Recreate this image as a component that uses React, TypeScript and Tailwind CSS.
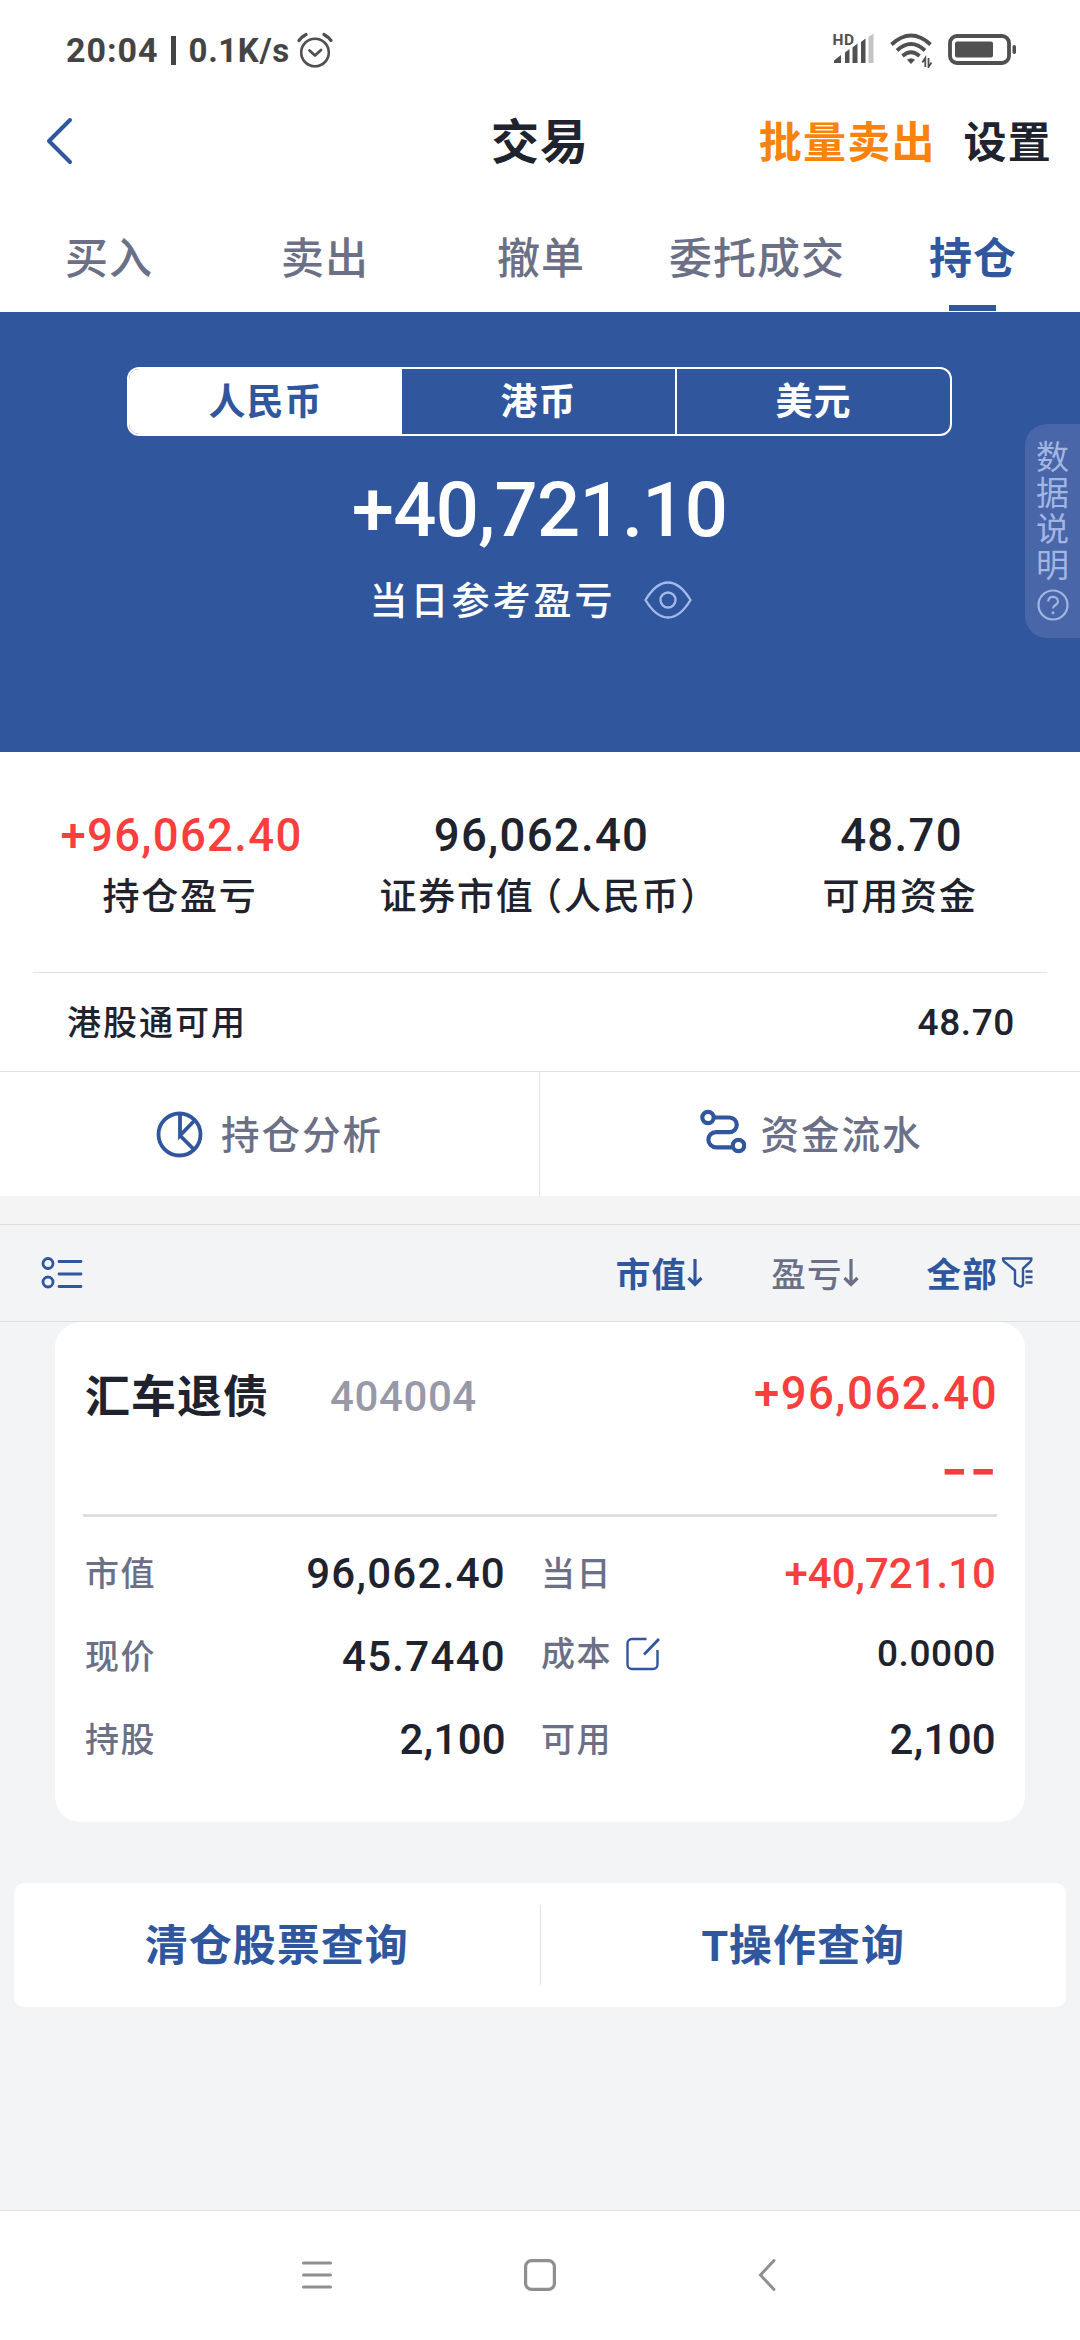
import { useState, type ReactNode } from "react";

const TABS = ["买入", "卖出", "撤单", "委托成交", "持仓"];
const CURRENCIES = ["人民币", "港币", "美元"];

function StatusBar() {
    return (
        <div className="h-[100px] pl-[66px] pr-[62px] flex items-center justify-between text-[#444]">
            <div className="flex items-center">
                <span className="text-[34px] leading-none font-bold tracking-[1px]">20:04</span>
                <span className="ml-[12px] w-[5px] h-[29px] bg-[#444]" />
                <span className="ml-[13px] text-[33px] leading-none font-bold tracking-[0.600px]">0.1K/s</span>
                <svg className="ml-[7px]" width="36" height="36" viewBox="0 0 36 36" fill="none" stroke="#505050" strokeLinecap="round">
                    <circle cx="18" cy="20.500" r="13.800" strokeWidth="2.600" />
                    <path d="M12.500 18.500l5.500 5 6-5.500" strokeWidth="2.800" strokeLinejoin="round" />
                    <path d="M2 8.500Q4.500 5 9 2.500M34 8.500Q31.500 5 27 2.500" strokeWidth="3.200" />
                </svg>
            </div>
            <div className="flex items-center">
                <svg width="44" height="36" viewBox="0 0 44 36" fill="#505050">
                    <text x="0.500" y="12.500" fontSize="15.500" fontWeight="700" letterSpacing="0.500">HD</text>
                    <path d="M2 31v-2.500l7-5.500v8zM13 31V20.500l4.500-3.500v14zM20.500 31V15.500l5-4v19.500zM29 31V10l4.500-3.500v24.500z" />
                    <path d="M36.500 31V5l5-3.500v29.500z" fill="#c4c4c4" />
                </svg>
                <svg className="ml-[14px]" width="44" height="36" viewBox="0 0 44 36" fill="none" stroke="#505050" strokeWidth="3.800">
                    <path d="M1.500 12.500Q21 -5.500 40.500 12.500" />
                    <path d="M7 18.500Q21 5.500 35 18.500" />
                    <path d="M12.500 24Q21 16.500 29.500 24" />
                    <path d="M21 32l-4-4.200q4-3.200 8 0z" fill="#505050" stroke="none" />
                    <path d="M35.300 35v-9l-3 4.500M38.500 26v9l3-4.500" strokeWidth="1.800" />
                </svg>
                <svg className="ml-[14px]" width="70" height="32" viewBox="0 0 70 32" fill="none">
                    <rect x="2" y="2" width="59" height="27" rx="7" stroke="#505050" strokeWidth="3.800" />
                    <rect x="7" y="7.500" width="38" height="16" rx="2" fill="#505050" />
                    <rect x="64.500" y="11" width="3.500" height="9" rx="1.700" fill="#505050" />
                </svg>
            </div>
        </div>
    );
}

function Header() {
    return (
        <div className="h-[82px] px-[28px] grid grid-cols-[1fr_auto_1fr] items-center text-[#20222e]">
            <div className="pl-[17px]">
                <svg width="30" height="48" viewBox="0 0 30 48" fill="none" stroke="#30569e" strokeWidth="4" strokeLinecap="round" strokeLinejoin="round">
                    <path d="M25 3L4 24l21 21" />
                </svg>
            </div>
            <h1 className="pt-[3px] text-[48px] leading-[60px] font-bold tracking-[1px]">交易</h1>
            <div className="pt-[3px] flex justify-end text-[43px] leading-[60px] tracking-[1.200px] font-bold">
                <span className="text-[#fb830b]">批量卖出</span>
                <span className="ml-[28px]">设置</span>
            </div>
        </div>
    );
}

function TabBar({ active, onChange }: { active: string; onChange: (tab: string) => void }) {
    return (
        <div className="h-[130px] grid grid-cols-5">
            {TABS.map((tab) => (
                <button
                    key={tab}
                    onClick={() => onChange(tab)}
                    className={`flex flex-col items-center justify-end text-[43px] tracking-[1px] whitespace-nowrap ${
                        tab === active ? "text-[#30569e] font-bold" : "text-[#6b7086] font-medium"
                    }`}
                >
                    <span className="h-[76px] pl-[2px] leading-[60px]">{tab}</span>
                    <span className={`w-[47px] h-[6px] mb-px ${tab === active ? "bg-[#30569e]" : ""}`} />
                </button>
            ))}
        </div>
    );
}

function ProfitPanel() {
    const [currency, setCurrency] = useState("人民币");

    return (
        <div className="relative h-[440px] bg-[#30569e] text-white pt-[55px] pr-px flex flex-col items-center">
            <div className="w-[825px] h-[69px] border-2 border-white rounded-[12px] overflow-hidden grid grid-cols-[273px_273px_1fr]">
                {CURRENCIES.map((name, i) => (
                    <button
                        key={name}
                        onClick={() => setCurrency(name)}
                        className={`pt-[3px] text-[37px] tracking-[1px] leading-[62px] font-bold ${
                            name === currency ? "bg-white text-[#30569e]" : ""
                        } ${i === 2 ? "border-l-2 border-white" : ""}`}
                    >
                        {name}
                    </button>
                ))}
            </div>
            <div className="mt-[34px] h-[80px] leading-[80px] text-[76px] font-medium tracking-[-0.700px]">+40,721.10</div>
            <div className="mt-[22px] flex items-center gap-[28px] mr-[18px]">
                <span className="pt-[2px] text-[38px] leading-[54px] tracking-[3px] font-medium">当日参考盈亏</span>
                <svg width="48" height="38" viewBox="0 0 48 38" fill="none" stroke="#a3b9ec" strokeWidth="2.400">
                    <path d="M1.500 19Q12 1.500 24 1.500T46.500 19Q36 36.500 24 36.500T1.500 19z" strokeLinejoin="round" />
                    <circle cx="24" cy="19" r="7.500" />
                </svg>
            </div>

            {/* floating help tab */}
            <div className="absolute right-0 top-[112px] w-[55px] h-[214px] bg-[#4866a8] rounded-l-[22px] pl-[11px] pt-[16px] text-[#a3b5e2]">
                <div className="w-[34px] text-[33px] leading-[36px] break-all">数据说明</div>
                <svg className="mt-[4px]" width="34" height="34" viewBox="0 0 34 34" fill="none" stroke="#a3b5e2" strokeWidth="2.200">
                    <circle cx="17" cy="17" r="14.500" />
                    <path d="M12.200 13.500c0-6.500 9.800-6 9.800 0 0 3.500-5 3.500-5 7" />
                    <circle cx="17" cy="24.800" r="1.500" fill="#a3b5e2" stroke="none" />
                </svg>
            </div>
        </div>
    );
}

function Stat({ value, red, children }: { value: string; red?: boolean; children: ReactNode }) {
    return (
        <div className="flex flex-col items-center">
            <span className={`pl-[3px] text-[45.500px] leading-[60px] font-medium tracking-[1.300px] ${red ? "text-[#f93e3e]" : ""}`}>{value}</span>
            <span className="mt-[2px] text-[37px] leading-[60px] font-medium tracking-[1.800px] whitespace-nowrap">{children}</span>
        </div>
    );
}

function Summary() {
    return (
        <div className="text-[#20222e]">
            <div className="h-[220px] pt-[54px] grid grid-cols-3">
                <Stat value="+96,062.40" red>持仓盈亏</Stat>
                <Stat value="96,062.40">
                    证券市值<span className="ml-[9px] [font-feature-settings:'halt']">（</span>人民币
                    <span className="[font-feature-settings:'halt']">）</span>
                </Stat>
                <Stat value="48.70">可用资金</Stat>
            </div>
            <div className="h-px mx-[33px] bg-[#dfe1e3]" />
            <div className="h-[98px] pt-[2px] pl-[67px] pr-[65px] flex items-center justify-between font-medium">
                <span className="text-[34px] tracking-[2px]">港股通可用</span>
                <span className="text-[37px] tracking-[0.600px]">48.70</span>
            </div>
            <div className="h-[125px] border-t border-[#dfe1e3] grid grid-cols-2 text-[38.500px] tracking-[2px] text-[#6b7086] font-medium">
                <div className="flex items-center justify-center gap-[18px] border-r border-[#e3e5e7]">
                    <svg width="47" height="47" viewBox="0 0 47 47" fill="none" stroke="#30569e" strokeWidth="3.800">
                        <circle cx="23.500" cy="23.500" r="21" />
                        <path d="M24 2.500V24.500L39 9M24 24.500L38.500 39" />
                    </svg>
                    <span className="pt-[4px]">持仓分析</span>
                </div>
                <div className="flex items-center justify-center gap-[14px] pl-[3px]">
                    <svg className="mb-[4px]" width="46" height="46" viewBox="0 0 46 46" fill="none" stroke="#30569e" strokeWidth="4.200">
                        <circle cx="8" cy="8.500" r="5.700" />
                        <circle cx="38.500" cy="36.500" r="5.700" />
                        <path d="M14 8.500h15.500a7.300 7.300 0 0 1 0 14.600H16a7.600 7.600 0 0 0 0 15.200h17" />
                    </svg>
                    <span className="pt-[4px]">资金流水</span>
                </div>
            </div>
        </div>
    );
}

function SortArrow() {
    return (
        <svg width="16" height="32" viewBox="0 0 16 32" fill="none" stroke="currentColor" strokeWidth="3.200">
            <path d="M8 2v26M1.500 21L8 27.500 14.500 21" />
        </svg>
    );
}

function Toolbar() {
    return (
        <div className="h-[98px] pl-[41px] pr-[46px] border-y border-[#dcdee0] bg-[#f2f4f6] flex items-center text-[34.500px] tracking-[1.200px] leading-[60px] text-[#30569e] font-medium">
            <svg width="42" height="34" viewBox="0 0 42 34" fill="none" stroke="#30569e" strokeWidth="2.800" strokeLinecap="round">
                <circle cx="7" cy="7.500" r="5" />
                <circle cx="7" cy="26" r="5" />
                <path d="M18 5.500h22M18 18h22M18 30.500h22" />
            </svg>
            <span className="ml-auto pt-[3px] font-bold">市值</span>
            <SortArrow />
            <div className="ml-[68px] flex items-center text-[#6b7086]">
                <span className="pt-[3px]">盈亏</span>
                <SortArrow />
            </div>
            <span className="ml-[68px] pt-[3px] font-bold">全部</span>
            <svg className="ml-[3px]" width="33" height="34" viewBox="0 0 33 34" fill="none" stroke="#30569e" strokeWidth="2.400" strokeLinejoin="round">
                <path d="M2 2.500h28.500q0 2-1.500 3.500L22 12.500v16q-1 3-4 1.500L14 27.500V14.500L3 5.500Q2 4.500 2 2.500z" />
                <path d="M24.500 15.500h7M24.500 21h7M24.500 26.500h7" />
            </svg>
        </div>
    );
}

type CellProps = {
    label: string;
    value: string;
    valueClass?: string;
    className?: string;
    icon?: ReactNode;
};

function Cell({ label, value, valueClass = "text-[42px] tracking-[1.300px]", className = "", icon }: CellProps) {
    return (
        <div className={`h-[83px] flex items-center justify-between font-medium ${className}`}>
            <span className="flex items-center text-[34px] tracking-[1.500px] text-[#6b7086]">
                {label}
                {icon}
            </span>
            <span className={`-mr-px pb-[2px] ${valueClass}`}>{value}</span>
        </div>
    );
}

function PositionCard() {
    return (
        <div className="mx-[55px] h-[500px] px-[28px] bg-white rounded-[26px] text-[#20222e]">
            <div className="h-[192px] pt-[46px]">
                <div className="flex items-center h-[56px] pl-[2px]">
                    <span className="pt-[4px] text-[45px] font-bold tracking-[1px]">汇车退债</span>
                    <span className="ml-[61px] text-[42px] font-medium text-[#9899a8] tracking-[0.600px]">404004</span>
                    <span className="ml-auto -mr-px mb-[3px] text-[45.500px] font-medium tracking-[1.500px] text-[#f93e3e]">+96,062.40</span>
                </div>
                <div className="mt-[14px] -mr-px h-[60px] leading-[60px] text-right text-[60px] tracking-[1px] font-medium text-[#f23e42] font-['Inter',sans-serif]">--</div>
            </div>
            <div className="h-[3px] bg-[#dedfe0]" />
            <div className="pt-[16px] pl-[2px] pr-px grid grid-cols-[420px_454px] gap-x-[36px]">
                <Cell label="市值" value="96,062.40" />
                <Cell label="当日" value="+40,721.10" valueClass="text-[42px] text-[#f93e3e]" />
                <Cell label="现价" value="45.7440" />
                <Cell
                    label="成本"
                    value="0.0000"
                    className="pb-[6px]"
                    valueClass="text-[37px] tracking-[0.600px]"
                    icon={
                        <svg className="ml-[13px] mb-[2px]" width="36" height="36" viewBox="0 0 36 36" fill="none" stroke="#30569e" strokeWidth="2.400">
                            <path d="M21.500 3H7a4.500 4.500 0 0 0-4.500 4.500v21A4.500 4.500 0 0 0 7 33h21a4.500 4.500 0 0 0 4.500-4.500V14" />
                            <path d="M19 18.500L34 3" strokeWidth="2.800" />
                        </svg>
                    }
                />
                <Cell label="持股" value="2,100" valueClass="text-[42px] tracking-[0.300px]" />
                <Cell label="可用" value="2,100" valueClass="text-[42px] tracking-[0.300px]" />
            </div>
        </div>
    );
}

function QueryLinks() {
    return (
        <div className="mt-[61px] mx-[14px] h-[124px] bg-white rounded-[10px] flex items-center text-[43px] tracking-[1px] font-bold text-[#30569e]">
            <button className="flex-1 pt-[3px]">清仓股票查询</button>
            <span className="w-px h-[80px] bg-[#dfe1e3]" />
            <button className="flex-1 pt-[3px]">T操作查询</button>
        </div>
    );
}

function SystemNav() {
    return (
        <div className="mt-auto h-[130px] pb-[1px] border-t border-[#e2e3e4] bg-white grid grid-cols-[302px_30px_192px_32px_202px_18px] items-center">
            <svg className="col-start-2" width="30" height="34" viewBox="0 0 30 34" stroke="#8f8f8f" strokeWidth="3" strokeLinecap="round">
                <path d="M1.500 5h27M1.500 17h27M1.500 29h27" />
            </svg>
            <svg className="col-start-4" width="32" height="34" viewBox="0 0 32 34" fill="none" stroke="#8f8f8f" strokeWidth="3.200">
                <rect x="1.600" y="2.600" width="28.800" height="28.800" rx="6" />
            </svg>
            <svg className="col-start-6" width="18" height="34" viewBox="0 0 18 34" fill="none" stroke="#8f8f8f" strokeWidth="3" strokeLinecap="round">
                <path d="M16 2.500L2.500 17 16 31.500" />
            </svg>
        </div>
    );
}

export default function App() {
    const [tab, setTab] = useState("持仓");

    return (
        <div className="w-[1080px] h-[2340px] flex flex-col bg-[#f2f4f6] overflow-hidden font-['Roboto','Noto_Sans_CJK_SC',sans-serif]">
            <div className="bg-white">
                <StatusBar />
                <Header />
                <TabBar active={tab} onChange={setTab} />
                <ProfitPanel />
                <Summary />
            </div>
            <div className="h-[28px] bg-[#f4f4f4]" />
            <Toolbar />
            <PositionCard />
            <QueryLinks />
            <SystemNav />
        </div>
    );
}
